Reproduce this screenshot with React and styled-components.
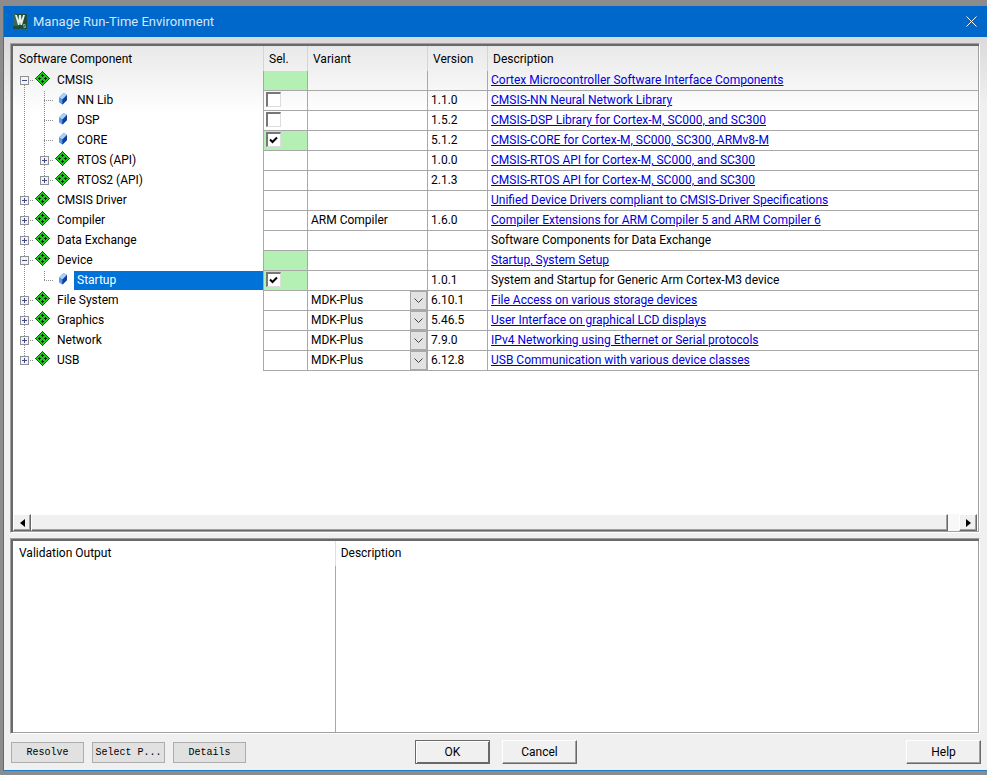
import { useState } from "react";
import styled, { createGlobalStyle, css } from "styled-components";

const rows = [
  { name: "CMSIS", level: 0, open: true, green: true, text: "Cortex Microcontroller Software Interface Components", link: true },
  { name: "NN Lib", level: 1, leaf: true, check: "off", version: "1.1.0", text: "CMSIS-NN Neural Network Library", link: true },
  { name: "DSP", level: 1, leaf: true, check: "off", version: "1.5.2", text: "CMSIS-DSP Library for Cortex-M, SC000, and SC300", link: true },
  { name: "CORE", level: 1, leaf: true, check: "on", green: true, version: "5.1.2", text: "CMSIS-CORE for Cortex-M, SC000, SC300, ARMv8-M", link: true },
  { name: "RTOS (API)", level: 1, version: "1.0.0", text: "CMSIS-RTOS API for Cortex-M, SC000, and SC300", link: true },
  { name: "RTOS2 (API)", level: 1, last: true, version: "2.1.3", text: "CMSIS-RTOS API for Cortex-M, SC000, and SC300", link: true },
  { name: "CMSIS Driver", level: 0, text: "Unified Device Drivers compliant to CMSIS-Driver Specifications", link: true },
  { name: "Compiler", level: 0, variant: "ARM Compiler", version: "1.6.0", text: "Compiler Extensions for ARM Compiler 5 and ARM Compiler 6", link: true },
  { name: "Data Exchange", level: 0, text: "Software Components for Data Exchange" },
  { name: "Device", level: 0, open: true, green: true, text: "Startup, System Setup", link: true },
  { name: "Startup", level: 1, leaf: true, last: true, selected: true, check: "on", green: true, version: "1.0.1", text: "System and Startup for Generic Arm Cortex-M3 device" },
  { name: "File System", level: 0, variant: "MDK-Plus", choose: true, version: "6.10.1", text: "File Access on various storage devices", link: true },
  { name: "Graphics", level: 0, variant: "MDK-Plus", choose: true, version: "5.46.5", text: "User Interface on graphical LCD displays", link: true },
  { name: "Network", level: 0, variant: "MDK-Plus", choose: true, version: "7.9.0", text: "IPv4 Networking using Ethernet or Serial protocols", link: true },
  { name: "USB", level: 0, last: true, variant: "MDK-Plus", choose: true, version: "6.12.8", text: "USB Communication with various device classes", link: true },
];

function Logo() {
  return (
    <svg width="14" height="15" viewBox="0 0 14 15">
      <rect width="14" height="15" fill="#1d4c3c" />
      <path d="M0 0h3L6 12H0z" fill="#3a6656" />
      <path d="M2 1h2l1.500 5L6 1h2l.5 5L10 1h2L9 11H7.500L7 8l-.5 3H5z" fill="#e4efe6" />
      <path d="M12.500 10.500h-2v1.500h2v1.500h-2" stroke="#7fae90" fill="none" />
    </svg>
  );
}

function Diamond() {
  return (
    <svg width="15" height="15" viewBox="0 0 15 15" shapeRendering="crispEdges">
      <path d="M7 0h1v1h1v1h1v1h1v1h1v1h1v1h1v1h1v1h-1v1h-1v1h-1v1h-1v1h-1v1h-1v1h-1v1H7v-1H6v-1H5v-1H4v-1H3v-1H2V9H1V8H0V7h1V6h1V5h1V4h1V3h1V2h1V1h1z" fill="#1b5a1b" />
      <path d="M7 1h1v1h1v1h1v1h1v1h1v1h1v1h1v1h-1v1h-1v1h-1v1h-1v1H9v1H8v1H7v-1H6v-1H5v-1H4v-1H3V9H2V8H1V7h1V6h1V5h1V4h1V3h1V2h1z" fill="#10d010" />
      <path d="M7 3h1v3H7zM6 4h3v1H6zM7 9h1v3H7zM6 10h3v1H6zM3 7h3v1H3zM4 6h1v3H4zM9 7h3v1H9zM10 6h1v3h-1z" fill="#032a03" />
    </svg>
  );
}

function Brick() {
  return (
    <svg width="10" height="12" viewBox="0 0 10 12">
      <path d="M1 4.500 5.500 0 9 2v5L4.500 11.500 1 9z" fill="#2a64c0" />
      <path d="M1 4.500 5.500 0 9 2 4.500 6.500z" fill="#a9d0f8" />
      <path d="M1 4.500 4.500 6.500v5L1 9z" fill="#5c9ae6" />
      <path d="M4.500 6.500 9 2v5L4.500 11.500z" fill="#123f96" />
    </svg>
  );
}

function Guide({ up, down, right, children }) {
  return (
    <GuideBox>
      <svg width="20" height="20" stroke="#8c8c8c" strokeDasharray="1 1">
        {up && <path d="M10.500 0v10" />}
        {down && <path d="M10.500 10v10" />}
        {right && <path d="M10 9.500h10" />}
      </svg>
      {children}
    </GuideBox>
  );
}

function TreeItem({ row, first }) {
  const expander = !row.leaf && (
    <Expander aria-label={(row.open ? "Collapse " : "Expand ") + row.name}>
      <svg width="7" height="7" stroke="#3c4a8c" shapeRendering="crispEdges">
        <path d="M1 3.500h5" />
        {!row.open && <path d="M3.500 1v5" />}
      </svg>
    </Expander>
  );
  return (
    <Tree>
      {row.level === 1 && <Guide up down />}
      <Guide up={!first} down={!row.last} right>
        {expander}
      </Guide>
      <IconBox>{row.leaf ? <Brick /> : <Diamond />}</IconBox>
      <Name $selected={row.selected}>{row.name}</Name>
    </Tree>
  );
}

function Check({ name, initial }) {
  const [on, setOn] = useState(initial);
  return (
    <CheckBox>
      <input type="checkbox" aria-label={name} checked={on} onChange={() => setOn(!on)} />
      {on && (
        <svg width="9" height="8" viewBox="0 0 9 8">
          <path d="M1 3.500 3.500 6 8 1.500" stroke="#000" strokeWidth="2" fill="none" />
        </svg>
      )}
    </CheckBox>
  );
}

function Variant({ row }) {
  return (
    <VariantBox>
      <select aria-label={row.name + " variant"} defaultValue={row.variant}>
        <option>{row.variant}</option>
      </select>
      <Drop>
        <svg width="9" height="6" fill="none" stroke="#404040">
          <path d="M.5 .5l4 4 4-4" />
        </svg>
      </Drop>
    </VariantBox>
  );
}

export default function App() {
  return (
    <Desktop>
      <GlobalStyle />
      <Dialog>
        <TitleBar>
          <Logo />
          <h1>Manage Run-Time Environment</h1>
          <button aria-label="Close">
            <svg width="11" height="11" stroke="#fff" fill="none">
              <path d="M.5 .5l10 10M10.500 .5l-10 10" />
            </svg>
          </button>
        </TitleBar>
        <Body>
          <Panel $shaded>
            <Viewport>
              <Grid>
                <colgroup>
                  <col width="250" />
                  <col width="44" />
                  <col width="120" />
                  <col width="60" />
                  <col />
                </colgroup>
                <thead>
                  <tr>
                    <th>Software Component</th>
                    <th>Sel.</th>
                    <th>Variant</th>
                    <th>Version</th>
                    <th>Description</th>
                  </tr>
                </thead>
                <tbody>
                  {rows.map((row, i) => (
                    <tr key={row.name}>
                      <TreeCell>
                        <TreeItem row={row} first={i === 0} />
                      </TreeCell>
                      <Cell $green={row.green} $flush>
                        {row.check && <Check name={row.name} initial={row.check === "on"} />}
                      </Cell>
                      <Cell $flush={row.choose}>
                        {row.choose ? <Variant row={row} /> : row.variant}
                      </Cell>
                      <Cell>{row.version}</Cell>
                      <Cell>{row.link ? <a href="#doc">{row.text}</a> : row.text}</Cell>
                    </tr>
                  ))}
                </tbody>
              </Grid>
            </Viewport>
            <ScrollBar>
              <button aria-label="Scroll left">
                <svg width="5" height="8"><path d="M5 0v8L0 4z" /></svg>
              </button>
              <Thumb />
              <button aria-label="Scroll right">
                <svg width="5" height="8"><path d="M0 0v8l5-4z" /></svg>
              </button>
            </ScrollBar>
          </Panel>
          <Panel>
            <Output>
              <h2>Validation Output</h2>
              <h2>Description</h2>
              <div />
              <div />
            </Output>
          </Panel>
        </Body>
        <Footer>
          <Group>
            <FlatButton>Resolve</FlatButton>
            <FlatButton>Select P...</FlatButton>
            <FlatButton>Details</FlatButton>
          </Group>
          <Group $gap={12}>
            <Button $main>OK</Button>
            <Button>Cancel</Button>
          </Group>
          <Group $end>
            <Button>Help</Button>
          </Group>
        </Footer>
      </Dialog>
    </Desktop>
  );
}

const GlobalStyle = createGlobalStyle`
  * {
    box-sizing: border-box;
  }
  body {
    margin: 0;
    font-family: Roboto, sans-serif;
    font-size: 12px;
    color: #000;
  }
  button, select {
    font: inherit;
    color: inherit;
    padding: 0;
  }
  svg {
    display: block;
  }
`;
const Desktop = styled.div`
  min-height: 100vh;
  display: flex;
  padding: 6px 0 4px 3px;
  background: #8c8c8c;
`;
const Dialog = styled.div`
  flex: 1;
  min-width: 0;
  display: flex;
  flex-direction: column;
  border-left: 1px solid #1c7cc9;
  border-bottom: 1px solid #1c7cc9;
  background: linear-gradient(#dadada 31px, #f0f0f0 100px);
`;
const TitleBar = styled.header`
  display: flex;
  align-items: center;
  gap: 6px;
  height: 31px;
  padding: 0 10px 0 9px;
  background: #0068cb;
  color: #d6e6f6;
  h1 {
    flex: 1;
    margin: 0;
    font-size: 13px;
    font-weight: 400;
  }
  button {
    border: 0;
    background: none;
  }
`;
const Body = styled.main`
  flex: 1;
  display: grid;
  grid-template-columns: minmax(0, 1fr);
  grid-template-rows: 5fr 2fr;
  gap: 5px;
  padding: 6px 7px 0 6px;
`;
const Panel = styled.section`
  display: flex;
  flex-direction: column;
  border: 1px solid #a0a0a0;
  border-right-color: #fff;
  border-bottom-color: #fff;
  box-shadow: inset 2px 2px #696969, inset -1px -1px #a0a0a0;
  padding: 2px 1px 1px 2px;
  background: ${(p) => (p.$shaded ? "linear-gradient(#e8e8e8, #fff 70px)" : "#fff")};
`;
const Viewport = styled.div`
  flex: 1;
  overflow: hidden;
`;
const Grid = styled.table`
  width: 100%;
  table-layout: fixed;
  border-spacing: 0;
  th {
    height: 25px;
    padding: 0 5px;
    text-align: left;
    font-weight: 400;
    border-left: 1px solid #d4d4d4;
  }
  th:first-child {
    border: 0;
    padding-left: 6px;
  }
`;
const TreeCell = styled.td`
  height: 20px;
  padding: 0 0 0 1px;
`;
const Cell = styled.td`
  height: 20px;
  padding: ${(p) => (p.$flush ? "0" : "0 3px")};
  border-left: 1px solid #a8a8a8;
  border-bottom: 1px solid #a8a8a8;
  line-height: 18px;
  vertical-align: top;
  white-space: nowrap;
  background: ${(p) => (p.$green ? "#b4f0b4" : "transparent")};
  a {
    color: #0000e0;
  }
`;
const Tree = styled.div`
  display: flex;
  height: 20px;
`;
const GuideBox = styled.span`
  display: grid;
  width: 20px;
  height: 20px;
  > * {
    grid-area: 1 / 1;
  }
`;
const Expander = styled.button`
  width: 9px;
  height: 9px;
  margin: 5px 6px;
  border: 1px solid #919191;
  background: #f4f4f4;
`;
const IconBox = styled.span`
  display: flex;
  justify-content: center;
  width: 17px;
  height: 15px;
  margin-right: 3px;
  align-items: center;
`;
const Name = styled.span`
  padding: 0 3px;
  line-height: 18px;
  height: 19px;
  ${(p) =>
    p.$selected &&
    css`
      flex: 1;
      background: #0072d8;
      color: #fff;
    `}
`;
const CheckBox = styled.label`
  display: grid;
  width: 15px;
  place-items: center;
  margin: 1px 2px 0;
  > * {
    grid-area: 1 / 1;
  }
  input {
    appearance: none;
    width: 15px;
    height: 15px;
    margin: 0;
    background: #fff;
    border: 2px solid #777;
    border-right: 1px solid #ddd;
    border-bottom: 1px solid #ddd;
  }
  svg {
    pointer-events: none;
  }
`;
const VariantBox = styled.div`
  display: grid;
  height: 19px;
  > * {
    grid-area: 1 / 1;
  }
  select {
    appearance: none;
    border: 0;
    background: none;
    height: 18px;
    padding: 0 3px;
  }
`;
const Drop = styled.span`
  display: grid;
  place-items: center;
  justify-self: end;
  width: 17px;
  border: 1px solid #a8a8a8;
  background: #e2e2e2;
  pointer-events: none;
`;
const raised = css`
  border: 1px solid #fff;
  border-right-color: #696969;
  border-bottom-color: #696969;
  box-shadow: inset -1px -1px #a0a0a0;
  background: #f0f0f0;
`;
const ScrollBar = styled.div`
  display: flex;
  height: 17px;
  margin: 0 1px 0 0;
  background: #f8f8f8;
  button {
    display: grid;
    place-items: center;
    width: 18px;
    ${raised}
  }
`;
const Thumb = styled.div`
  flex: 1;
  margin-right: 11px;
  ${raised}
`;
const Output = styled.div`
  flex: 1;
  display: grid;
  grid-template-columns: 1fr 2fr;
  grid-template-rows: 25px 1fr;
  h2 {
    margin: 0;
    padding: 0 6px;
    font-size: 12px;
    font-weight: 400;
    line-height: 25px;
  }
  h2 + h2 {
    padding: 0 5px;
    border-left: 1px solid #dedede;
  }
  div + div {
    border-left: 1px solid #a8a8a8;
  }
`;
const Footer = styled.footer`
  display: grid;
  grid-template-columns: 1fr auto 1fr;
  align-items: center;
  padding: 6px 6px 6px 7px;
`;
const Group = styled.div`
  display: flex;
  gap: ${(p) => p.$gap || 8}px;
  justify-content: ${(p) => (p.$end ? "flex-end" : "flex-start")};
`;
const FlatButton = styled.button`
  width: 73px;
  height: 21px;
  border: 1px solid #adadad;
  background: #e1e1e1;
  font-family: "Liberation Mono", monospace;
  font-size: 10px;
`;
const Button = styled.button`
  width: 75px;
  height: 24px;
  ${raised}
  ${(p) =>
    p.$main &&
    css`
      border-color: #696969;
      box-shadow: inset 1px 1px #fff, inset -1px -1px #696969;
    `}
`;
